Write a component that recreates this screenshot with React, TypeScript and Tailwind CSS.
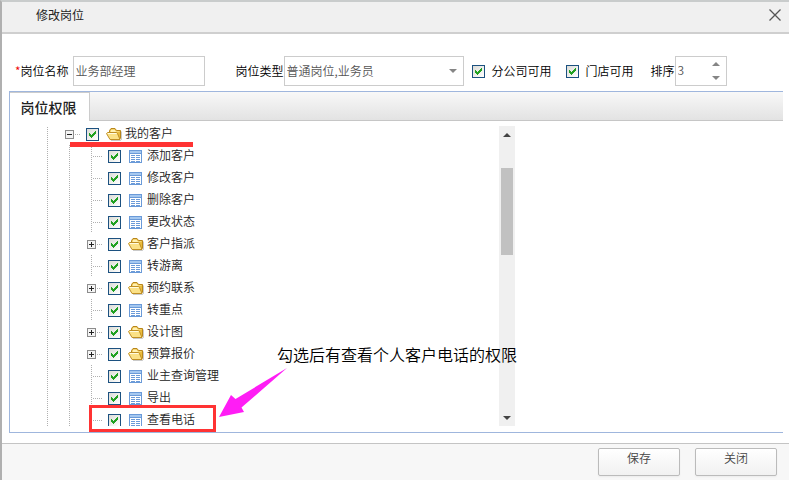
import { useState } from 'react';

type TreeItem = {
  label: string;
  folder?: boolean;
};

const ROOT_LABEL = '我的客户';

const items: TreeItem[] = [
  { label: '添加客户' },
  { label: '修改客户' },
  { label: '删除客户' },
  { label: '更改状态' },
  { label: '客户指派', folder: true },
  { label: '转游离' },
  { label: '预约联系', folder: true },
  { label: '转重点' },
  { label: '设计图', folder: true },
  { label: '预算报价', folder: true },
  { label: '业主查询管理' },
  { label: '导出' },
  { label: '查看电话' },
];

function Checkbox({ id }: { id: string }) {
  const [checked, setChecked] = useState(true);
  return (
    <span className="grid shrink-0">
      <input
        id={id}
        type="checkbox"
        checked={checked}
        onChange={(e) => setChecked(e.target.checked)}
        className="col-start-1 row-start-1 size-[13px] appearance-none border border-[#1c5180] bg-linear-to-br from-[#dcdcd7] to-white"
      />
      {checked && (
        <svg viewBox="0 0 13 13" shapeRendering="crispEdges" className="pointer-events-none col-start-1 row-start-1 size-[13px]">
          <path fill="#21a121" d="M3 5h1v1h1v1h1V6h1V5h1V4h1V3h1v3H9v1H8v1H7v1H6v1H5V9H4V8H3z" />
        </svg>
      )}
    </span>
  );
}

function FolderIcon() {
  return (
    <svg viewBox="0 0 16 16" className="size-4 shrink-0">
      <path d="M15.500 5.500V13.500L14.500 14.500H5" fill="none" stroke="#8a8a8a" strokeOpacity=".45" />
      <path d="M3.500 8V4.500L5 2.500H9L10.500 4.500H14.500V12L13.500 13.500H5z" fill="#e9bb3c" stroke="#b8861b" strokeLinejoin="round" />
      <path d="M4.500 6V5L5.500 3.500H8.500L10 5.500H13.500V6z" fill="#fff0b0" />
      <path d="M.5 7.500L1.500 6.500H10.500L11.500 7.500L14 13.500H4z" fill="#fbe186" stroke="#c08f24" strokeLinejoin="round" />
      <path d="M2 7.500H10.500" stroke="#fffbe0" />
    </svg>
  );
}

function SheetIcon() {
  return (
    <svg viewBox="0 0 16 16" shapeRendering="crispEdges" className="size-4 shrink-0">
      <path d="M1 2h13v13H1z" fill="#6a9ad8" />
      <path d="M2 3h11v2H2z" fill="#a5c8f0" />
      <path d="M2 6h11v8H2z" fill="#fff" />
      <path d="M3 7h4v1H3zM8 7h4v1H8zM3 9h4v1H3zM8 9h4v1H8zM3 11h4v1H3zM8 11h4v1H8zM3 13h4v1H3zM8 13h4v1H8z" fill="#6a9ad8" />
    </svg>
  );
}

function Guide({ branch = false }: { branch?: boolean }) {
  return (
    <svg viewBox="0 0 22 22" shapeRendering="crispEdges" className="size-[22px] shrink-0" stroke="#b0b0b0" strokeDasharray="1 1">
      <path d="M11.5 0V22" />
      {branch && <path d="M13 11.5H22" />}
    </svg>
  );
}

function Expander({ open = false, label }: { open?: boolean; label: string }) {
  return (
    <button type="button" aria-label={label} aria-expanded={open} className="size-[22px] shrink-0">
      <svg viewBox="0 0 22 22" shapeRendering="crispEdges" className="size-[22px]" fill="none">
        <path d="M17 11.5H22" stroke="#b0b0b0" strokeDasharray="1 1" />
        <rect x="7.5" y="7.5" width="8" height="8" fill="#f4f4f4" stroke="#8c8c8c" />
        <path d="M9 11.5H14" stroke="#222" />
        {!open && <path d="M11.5 9V14" stroke="#222" />}
      </svg>
    </button>
  );
}

function Arrow({ up = false, className = '' }: { up?: boolean; className?: string }) {
  return (
    <svg viewBox="0 0 8 4" className={`h-1 w-2 ${className}`} fill="currentColor">
      <path d={up ? 'M0 4L4 0L8 4z' : 'M0 0L4 4L8 0z'} />
    </svg>
  );
}

function NodeLabel({ id, item }: { id: string; item: TreeItem }) {
  return (
    <label className="flex items-center pl-1.5">
      <Checkbox id={id} />
      <span className="mr-[3px] ml-[7px]">{item.folder ? <FolderIcon /> : <SheetIcon />}</span>
      <span className="pb-0.5 leading-3">{item.label}</span>
    </label>
  );
}

function PermissionTree() {
  return (
    <ul className="-mt-[3px] pl-[26px]">
      <li>
        <div className="flex h-[22px] items-center">
          <Guide />
          <Expander open label={ROOT_LABEL} />
          <NodeLabel id="node-root" item={{ label: ROOT_LABEL, folder: true }} />
        </div>
        <ul>
          {items.map((item, i) => (
            <li key={item.label} className="flex h-[22px] items-center">
              <Guide />
              <Guide />
              {item.folder ? <Expander label={item.label} /> : <Guide branch />}
              <NodeLabel id={`node-${i}`} item={item} />
            </li>
          ))}
        </ul>
      </li>
    </ul>
  );
}

export default function App() {
  const [name, setName] = useState('业务部经理');
  const [order, setOrder] = useState(3);

  return (
    <div className="flex min-h-screen flex-col border-t-2 border-l-2 border-t-[#c9cccc] border-l-[#b0b0b0] bg-white font-['Noto_Sans_CJK_SC',sans-serif] text-xs font-[350] text-[#222]">
      <header className="flex h-8 items-center justify-between border-b-2 border-[#cfcfcf] bg-[#f0f0f0] pr-2 pl-[34px]">
        <h1 className="pb-1 font-normal">修改岗位</h1>
        <button type="button" aria-label="关闭窗口" className="pb-1 text-[#555]">
          <svg viewBox="0 0 12 12" className="size-3" stroke="currentColor" strokeWidth="1.3">
            <path d="M.5.5L11.5 11.5M11.5.5L.5 11.5" />
          </svg>
        </button>
      </header>

      <form className="flex flex-wrap items-center pt-[22px] pb-[5px] pl-[13px] text-black">
        <label htmlFor="name" className="mr-1">
          <span className="text-[#e00]">*</span>岗位名称
        </label>
        <input
          id="name"
          value={name}
          onChange={(e) => setName(e.target.value)}
          className="h-[30px] w-[132px] border border-[#ccc] px-0.5 pb-0.5 text-[#555]"
        />
        <label htmlFor="type" className="ml-[31px]">岗位类型</label>
        <div className="grid items-center">
          <select id="type" className="col-start-1 row-start-1 h-[30px] w-[180px] appearance-none border border-[#ccc] bg-white px-0.5 text-[#555]">
            <option>普通岗位,业务员</option>
          </select>
          <Arrow className="pointer-events-none col-start-1 row-start-1 mr-[7px] justify-self-end text-[#858585]" />
        </div>
        <label className="ml-2 flex items-center gap-[7px]">
          <Checkbox id="branch" />
          分公司可用
        </label>
        <label className="ml-3.5 flex items-center gap-[7px]">
          <Checkbox id="store" />
          门店可用
        </label>
        <label htmlFor="order" className="ml-[17px]">排序</label>
        <div className="flex h-[30px] w-[52px] border border-[#ccc]">
          <input
            id="order"
            type="number"
            value={order}
            onChange={(e) => setOrder(Number(e.target.value))}
            className="w-0 flex-1 [appearance:textfield] px-0.5 pb-0.5 text-[#555]"
          />
          <div className="flex w-5 flex-col">
            <button type="button" aria-label="增加" onClick={() => setOrder(order + 1)} className="flex flex-1 items-center justify-center">
              <Arrow up className="text-[#858585]" />
            </button>
            <button type="button" aria-label="减少" onClick={() => setOrder(order - 1)} className="flex flex-1 items-center justify-center">
              <Arrow className="text-[#858585]" />
            </button>
          </div>
        </div>
      </form>

      <section className="relative mr-1.5 mb-2.5 ml-[7px] border-y border-l border-[#9fb6dd]">
        <div role="tablist" className="flex h-[29px] bg-linear-to-b from-[#f8f8f8] to-[#e2e2e2]">
          <button type="button" role="tab" aria-selected="true" className="w-20 border-t border-r border-[#ccc] bg-white pr-0.5 text-sm font-medium">
            岗位权限
          </button>
          <div className="flex-1 border-b border-[#c6c6c6]" />
        </div>

        <div className="pt-[5px] pb-1.5">
          <div className="flex h-[300px] max-w-[505px] overflow-hidden">
            <div className="flex-1">
              <PermissionTree />
            </div>
            {/* 滚动条 */}
            <div className="flex w-4 flex-col items-center justify-between bg-[#f0f0f0] text-[#444]">
              <button type="button" aria-label="向上滚动" className="flex h-[18px] w-full items-center justify-center">
                <Arrow up />
              </button>
              <div className="mt-6 w-3 flex-1">
                <div className="h-[87px] bg-[#c1c1c1]" />
              </div>
              <button type="button" aria-label="向下滚动" className="flex h-4 w-full items-center justify-center">
                <Arrow />
              </button>
            </div>
          </div>
        </div>

        {/* 标注 */}
        <div className="pointer-events-none absolute top-[50px] left-[60px] h-[5px] w-[123px] bg-[#ff3333]" />
        <div className="pointer-events-none absolute top-[313px] left-[79px] h-[27px] w-[127px] border-3 border-[#ff3333]" />
        <svg viewBox="0 0 70 50" className="pointer-events-none absolute top-[275px] left-[208px] h-[50px] w-[70px]">
          <path d="M69 1L17.500 32L13 28L1 50L26 45L23.500 40.500z" fill="#ff1df5" />
        </svg>
        <p className="pointer-events-none absolute top-[250px] left-[267px] text-base font-[350] text-black">
          勾选后有查看个人客户电话的权限
        </p>
      </section>

      <footer className="flex flex-1 items-start justify-end gap-[15px] border-t border-[#c4c4c4] bg-[#f7f7f7] pt-1 pr-3 pb-1">
        <button type="button" className="h-7 w-[82px] rounded-xs border border-[#bbb] bg-linear-to-b from-white to-[#f1f1f1] pb-2 text-[#444] shadow-xs">
          保存
        </button>
        <button type="button" className="h-7 w-[82px] rounded-xs border border-[#bbb] bg-linear-to-b from-white to-[#f1f1f1] pb-2 text-[#444] shadow-xs">
          关闭
        </button>
      </footer>
    </div>
  );
}
